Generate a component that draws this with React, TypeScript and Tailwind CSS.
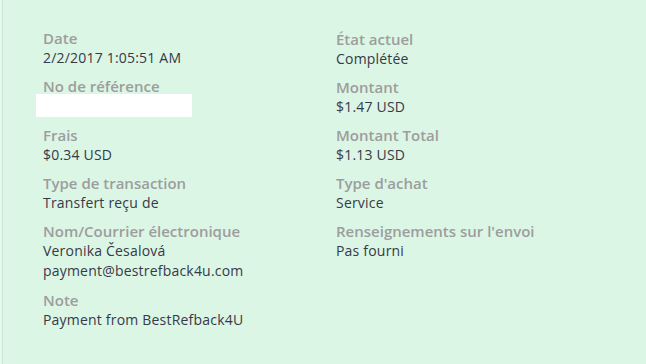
import React from "react";

const Label = ({ children }: { children: React.ReactNode }) => (
  <div className="text-[15px] leading-[19px] font-semibold text-[#9d9d9d]">{children}</div>
);
const Value = ({ children }: { children: React.ReactNode }) => (
  <div className="text-[14px] leading-[19px] tracking-[0.2px] text-[#373948]">{children}</div>
);

export default function App() {
  return (
    <div
      className="w-[646px] h-[364px] bg-[#dbf6e5] flex"
      style={{ fontFamily: '"Open Sans", "Liberation Sans", sans-serif' }}
    >
      <div className="w-[2px] bg-[#e4f8ec]" />
      <div className="w-[1px] bg-[#c9e7d4]" />
      <div className="flex pl-[40px] pt-[29px]">
        <div className="w-[293px] flex flex-col gap-[10px]">
          <div>
            <Label>Date</Label>
            <Value>2/2/2017 1:05:51 AM</Value>
          </div>
          <div>
            <Label>No de référence</Label>
            <div className="ml-[-7px] mt-[-2px] w-[156px] h-[23px] bg-white" />
          </div>
          <div className="-mt-[1px]">
            <Label>Frais</Label>
            <Value>$0.34 USD</Value>
          </div>
          <div>
            <Label>Type de transaction</Label>
            <Value>Transfert reçu de</Value>
          </div>
          <div>
            <Label>Nom/Courrier électronique</Label>
            <div className="text-[14px] leading-[20px] tracking-[0.2px] text-[#373948]">
              Veronika Česalová
              <br />
              payment@bestrefback4u.com
            </div>
          </div>
          <div>
            <Label>Note</Label>
            <Value>Payment from BestRefback4U</Value>
          </div>
        </div>
        <div className="w-[293px] flex flex-col gap-[10px] pt-[0.5px]">
          <div>
            <Label>État actuel</Label>
            <Value>Complétée</Value>
          </div>
          <div>
            <Label>Montant</Label>
            <Value>$1.47 USD</Value>
          </div>
          <div>
            <Label>Montant Total</Label>
            <Value>$1.13 USD</Value>
          </div>
          <div>
            <Label>Type d'achat</Label>
            <Value>Service</Value>
          </div>
          <div>
            <Label>Renseignements sur l'envoi</Label>
            <Value>Pas fourni</Value>
          </div>
        </div>
      </div>
    </div>
  );
}
